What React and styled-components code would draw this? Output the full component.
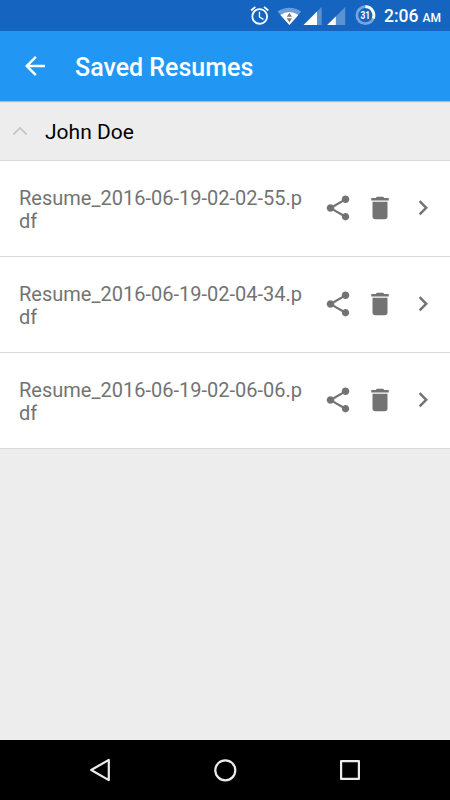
import styled, { createGlobalStyle } from 'styled-components'

const GlobalStyle = createGlobalStyle`
    * {
        box-sizing: border-box;
    }
    body {
        margin: 0;
        font-family: Roboto, 'Noto Sans', sans-serif;
        background: #ededed;
    }
    svg {
        display: block;
        flex: none;
    }
`

const Screen = styled.div`
    display: flex;
    flex-direction: column;
    width: 450px;
    height: 800px;
    overflow: hidden;
    background: #ededed;
`

const StatusBar = styled.div`
    display: flex;
    align-items: center;
    justify-content: flex-end;
    height: 31px;
    padding-right: 10px;
    flex: none;
    background: #1565c0;
    color: #fff;
`

const Clock = styled.div`
    display: flex;
    align-items: baseline;
    gap: 4px;
    width: 56px;
    margin-left: 9px;
    padding-top: 3px;
    font-size: 17.5px;
    line-height: 20px;
    font-weight: 500;
    white-space: nowrap;
`

const Meridiem = styled.span`
    font-size: 12px;
`

const AppBar = styled.header`
    display: flex;
    align-items: center;
    height: 70px;
    padding-left: 20px;
    flex: none;
    background: #2196f3;
    color: #fff;
    box-shadow: 0 1px 1px rgba(0, 0, 0, 0.22);
    z-index: 1;
`

const Title = styled.h1`
    margin: 4px 0 0 25px;
    font-size: 25px;
    line-height: 30px;
    font-weight: 500;
`

const GroupHeader = styled.div`
    display: flex;
    align-items: center;
    height: 60px;
    padding-left: 12px;
    flex: none;
    border-bottom: 1px solid #dadada;
    color: #000;
`

const GroupName = styled.span`
    margin: 3px 0 0 17px;
    font-size: 21px;
    line-height: 26px;
`

const Row = styled.div`
    display: flex;
    align-items: center;
    height: 96px;
    padding: 0 12.5px 0 19px;
    flex: none;
    background: #fff;
    border-bottom: 1px solid #dadada;
`

const FileName = styled.div`
    width: 286px;
    margin-top: 3px;
    font-size: 20px;
    line-height: 23.5px;
    color: #737373;
    word-break: break-all;
`

const Actions = styled.div`
    display: flex;
    gap: 12.5px;
    margin: 0 0 1px auto;
    color: #737373;
`

const Content = styled.main`
    flex: 1;
`

const NavBar = styled.nav`
    display: flex;
    align-items: center;
    justify-content: space-between;
    height: 60px;
    padding: 0 85px;
    flex: none;
    background: #000;
`

function Icon({ d, size = 30 }) {
  return (
    <svg width={size} height={size} viewBox="0 0 24 24" fill="currentColor">
      <path d={d} />
    </svg>
  )
}

const icons = {
  back: 'M20 11H7.83l5.59-5.59L12 4l-8 8 8 8 1.41-1.41L7.83 13H20v-2z',
  share: 'M18 16.08c-.76 0-1.44.3-1.96.77L8.91 12.7c.05-.23.09-.46.09-.7s-.04-.47-.09-.7l7.05-4.11c.54.5 1.25.81 2.04.81 1.66 0 3-1.34 3-3s-1.34-3-3-3-3 1.34-3 3c0 .24.04.47.09.7L8.04 9.81C7.5 9.31 6.79 9 6 9c-1.66 0-3 1.34-3 3s1.34 3 3 3c.79 0 1.5-.31 2.04-.81l7.12 4.16c-.05.21-.08.43-.08.65 0 1.61 1.31 2.92 2.92 2.92s2.92-1.31 2.92-2.92-1.31-2.92-2.92-2.92z',
  trash: 'M6 19c0 1.1.9 2 2 2h8c1.1 0 2-.9 2-2V7H6v12zM19 4h-3.5l-1-1h-5l-1 1H5v2h14V4z',
  next: 'M8.59 16.34l4.58-4.59-4.58-4.59L10 5.75l6 6-6 6z',
  alarm: 'M22 5.72l-4.6-3.86-1.29 1.53 4.6 3.86L22 5.72zM7.88 3.39L6.6 1.86 2 5.71l1.29 1.53 4.59-3.85zM12.5 8H11v6l4.75 2.85.75-1.23-4-2.37V8zM12 4c-4.97 0-9 4.03-9 9s4.02 9 9 9c4.97 0 9-4.03 9-9s-4.03-9-9-9zm0 16c-3.87 0-7-3.13-7-7s3.13-7 7-7 7 3.13 7 7-3.13 7-7 7z'
}

function StatusIcons() {
  return (
    <svg width="126" height="31" viewBox="249 0 126 31" overflow="visible">
      <svg x="248.7" y="4.5" width="22" height="22" viewBox="0 0 24 24" fill="#fff">
        <path d={icons.alarm} />
      </svg>
      {/* wifi */}
      <path d="M277.5 11.5Q289.3 4 301.2 11.5L289.4 25z" fill="#6c9fd8" />
      <path d="M280.4 14.9Q289.4 9 298.4 14.9L289.4 25z" fill="#fff" />
      <path d="M286.8 16.7l2.6-4 2.6 4zM286.8 18.2l2.6 4.2 2.6-4.2z" fill="#7b7b7b" />
      {/* signal, two sims */}
      <path d="M321.6 7v18h-18z" fill="#5b92d2" />
      <path d="M317 11.6V25h-13.4z" fill="#fff" />
      <path d="M345.2 7v18h-18z" fill="#5b92d2" />
      <path d="M335.8 16.4V25h-8.6z" fill="#fff" />
      {/* battery */}
      <circle cx="365.4" cy="15.2" r="8.5" fill="none" stroke="#76a5db" strokeWidth="2.8" />
      <path d="M365.4 6.7a8.5 8.5 0 0 1 7.8 11.8" fill="none" stroke="#fff" strokeWidth="2.8" />
      <text x="365.2" y="18.9" textAnchor="middle" fontSize="10" fontWeight="700" textLength="9.6" lengthAdjust="spacingAndGlyphs" fill="#fff">31</text>
    </svg>
  )
}

const files = [
  'Resume_2016-06-19-02-02-55.pdf',
  'Resume_2016-06-19-02-04-34.pdf',
  'Resume_2016-06-19-02-06-06.pdf'
]

function App() {
  const items = files.map(name => {
    return (
      <Row key={name}>
        <FileName>{name}</FileName>
        <Actions>
          <Icon d={icons.share} />
          <Icon d={icons.trash} />
          <Icon d={icons.next} />
        </Actions>
      </Row>
    )
  })

  return (
    <Screen>
      <GlobalStyle />
      <StatusBar>
        <StatusIcons />
        <Clock>2:06 <Meridiem>AM</Meridiem></Clock>
      </StatusBar>
      <AppBar>
        <Icon d={icons.back} />
        <Title>Saved Resumes</Title>
      </AppBar>
      <Content>
        <GroupHeader>
          <svg width="16" height="10" viewBox="0 0 16 10" fill="none" stroke="#c6c6c6" strokeWidth="1.8">
            <path d="M1.2 8.6L8 1.9l6.8 6.7" />
          </svg>
          <GroupName>John Doe</GroupName>
        </GroupHeader>
        {items}
      </Content>
      <NavBar>
        <svg width="30" height="30" viewBox="0 0 30 30" fill="none" stroke="#ececec" strokeWidth="2.2" strokeLinejoin="round">
          <path d="M23.8 4.9v20.2L6.2 15z" />
        </svg>
        <svg width="30" height="30" viewBox="0 0 30 30" fill="none" stroke="#ececec" strokeWidth="2.2">
          <circle cx="15.3" cy="15.3" r="10" />
        </svg>
        <svg width="30" height="30" viewBox="0 0 30 30" fill="none" stroke="#ececec" strokeWidth="2.2" strokeLinejoin="round">
          <rect x="6.1" y="6.1" width="17.8" height="17.8" />
        </svg>
      </NavBar>
    </Screen>
  )
}

export default App
